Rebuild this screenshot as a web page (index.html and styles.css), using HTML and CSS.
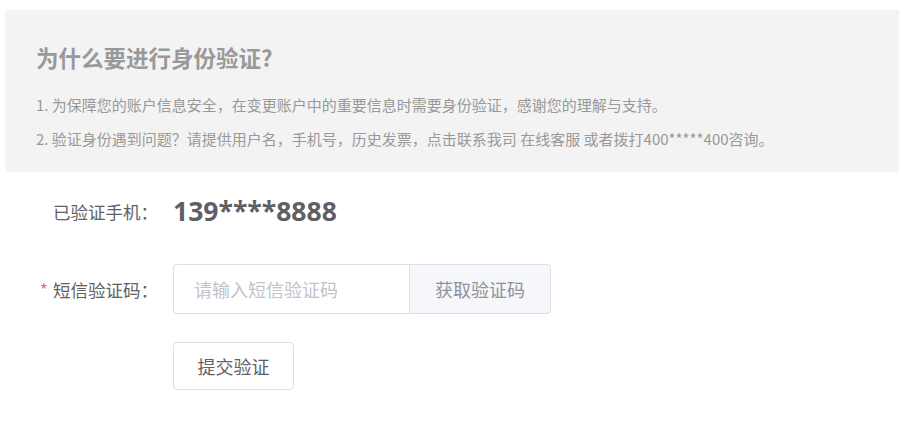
FILE: index.html
```html
<!DOCTYPE html>
<html lang="zh-CN">
<head>
<meta charset="utf-8">
<link rel="stylesheet" href="styles.css">
</head>
<body>
<div class="page">
  <section class="notice">
    <h2 class="notice-title">为什么要进行身份验证?</h2>
    <p class="notice-line">1. 为保障您的账户信息安全，在变更账户中的重要信息时需要身份验证，感谢您的理解与支持。</p>
    <p class="notice-line">2. 验证身份遇到问题？请提供用户名，手机号，历史发票，点击联系我司 在线客服 或者拨打400*****400咨询。</p>
  </section>
  <form class="verify-form">
    <div class="form-row">
      <label class="form-label">已验证手机：</label>
      <div class="phone">139****8888</div>
    </div>
    <div class="form-row">
      <label class="form-label"><span class="req">*</span>短信验证码：</label>
      <div class="input-group">
        <input class="code-input" type="text" placeholder="请输入短信验证码">
        <button class="code-btn" type="button">获取验证码</button>
      </div>
    </div>
    <div class="form-row">
      <span class="form-label"></span>
      <button class="submit-btn" type="button">提交验证</button>
    </div>
  </form>
</div>
</body>
</html>
```
FILE: styles.css
```css
html, body {
  margin: 0;
  padding: 0;
  background: #fff;
  overflow-x: hidden;
}
body {
  font-family: "Noto Sans CJK SC", "Open Sans", sans-serif;
}
.page {
  padding: 10px 0 0 5px;
}
.notice {
  background: #f3f3f3;
  border-radius: 4px 0 0 4px;
  margin-right: -10px;
  padding: 32px 0 16px 31px;
}
.notice-title {
  margin: 0 0 16px;
  font-size: 22.5px;
  line-height: 30px;
  font-weight: 700;
  color: #999;
}
.notice-line {
  margin: 0;
  font-size: 15px;
  line-height: 34px;
  color: #999;
  white-space: nowrap;
}
.verify-form {
  margin-top: 14px;
  display: flex;
  flex-direction: column;
  gap: 28px;
}
.form-row {
  display: flex;
  align-items: center;
  gap: 15px;
}
.form-label {
  width: 153px;
  text-align: right;
  font-size: 17.5px;
  color: #606266;
}
.req {
  color: #f56c6c;
  margin-right: 5px;
}
.phone {
  font-family: "Open Sans", sans-serif;
  font-weight: 700;
  font-size: 26.5px;
  line-height: 50px;
  color: #5f6063;
}
.input-group {
  display: flex;
  height: 50px;
}
.code-input {
  box-sizing: border-box;
  width: 236px;
  height: 50px;
  border: 1px solid #dcdfe6;
  border-right: none;
  border-radius: 4px 0 0 4px;
  padding: 0 20px;
  font-family: inherit;
  font-size: 18px;
  color: #606266;
  outline: none;
}
.code-input::placeholder {
  color: #c0c4cc;
}
.code-btn {
  box-sizing: border-box;
  width: 142px;
  height: 50px;
  border: 1px solid #dcdfe6;
  border-radius: 0 4px 4px 0;
  background: #f5f7fa;
  font-family: inherit;
  font-size: 18px;
  color: #909399;
}
.submit-btn {
  box-sizing: border-box;
  width: 121px;
  height: 48px;
  border: 1px solid #dcdfe6;
  border-radius: 4px;
  background: #fff;
  font-family: inherit;
  font-size: 18px;
  color: #606266;
}
```
